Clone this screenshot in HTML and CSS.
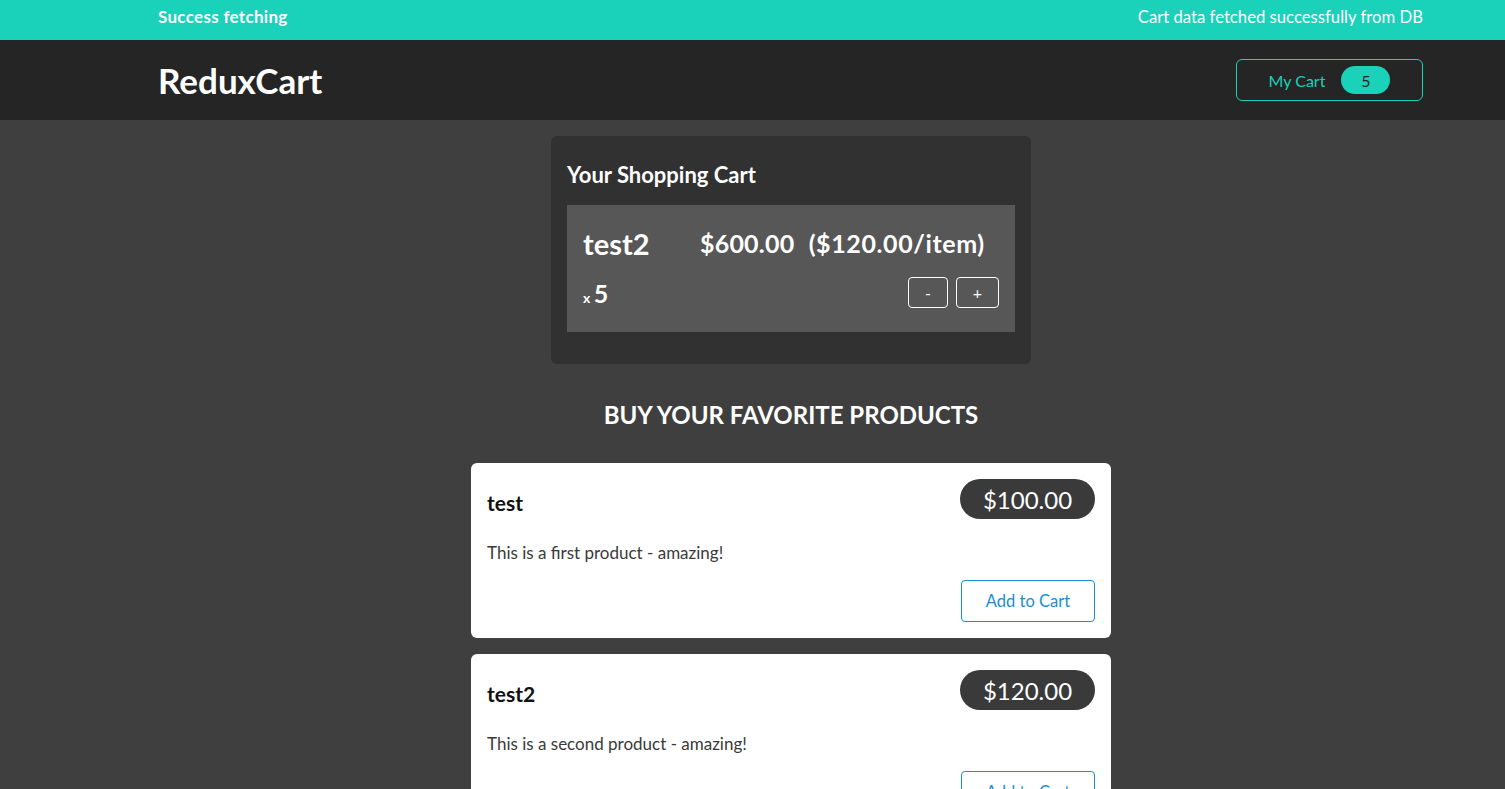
FILE: index.html
```html
<!DOCTYPE html>
<html lang="en">
<head>
<meta charset="utf-8">
<title>ReduxCart</title>
<link rel="stylesheet" href="styles.css">
</head>
<body>
<div class="page">
  <section class="notification">
    <h2>Success fetching</h2>
    <p>Cart data fetched successfully from DB</p>
  </section>
  <header class="header">
    <h1>ReduxCart</h1>
    <button class="cart-button"><span>My Cart</span><span class="badge">5</span></button>
  </header>
  <main class="main">
    <section class="cart">
      <h2>Your Shopping Cart</h2>
      <ul class="cart-list">
        <li class="item">
          <div class="item-header">
            <h3>test2</h3>
            <div class="price">$600.00 <span class="itemprice">($120.00/item)</span></div>
          </div>
          <div class="details">
            <div class="quantity">x <span>5</span></div>
            <div class="actions">
              <button>-</button>
              <button>+</button>
            </div>
          </div>
        </li>
      </ul>
    </section>
    <section class="products">
      <h2>Buy your favorite products</h2>
      <ul class="product-list">
        <li class="product">
          <div class="product-header">
            <h3>test</h3>
            <div class="product-price">$100.00</div>
          </div>
          <p>This is a first product - amazing!</p>
          <div class="product-actions"><button>Add to Cart</button></div>
        </li>
        <li class="product">
          <div class="product-header">
            <h3>test2</h3>
            <div class="product-price">$120.00</div>
          </div>
          <p>This is a second product - amazing!</p>
          <div class="product-actions"><button>Add to Cart</button></div>
        </li>
      </ul>
    </section>
  </main>
</div>
</body>
</html>
```
FILE: styles.css
```css
* { box-sizing: border-box; }
html, body {
  margin: 0;
  overflow: hidden;
  background: #3f3f3f;
  font-family: "Lato", "Liberation Sans", sans-serif;
}
.page {
  width: 1582px;
  min-height: 789px;
  background: #3f3f3f;
}
.notification {
  height: 40px;
  background: #1ad1b9;
  color: #fff;
  display: flex;
  justify-content: space-between;
  align-items: center;
  padding: 0 159px 7px 158px;
}
.notification h2 {
  margin: 0;
  font-size: 17px;
  letter-spacing: 0.3px;
  font-weight: 700;
}
.notification p {
  margin: 0;
  font-size: 16.7px;
}
.header {
  height: 80px;
  background: #252525;
  display: flex;
  justify-content: space-between;
  align-items: center;
  padding: 0 159px 0 158px;
}
.header h1 {
  margin: 0;
  color: #fff;
  font-size: 35px;
  font-weight: 700;
}
.cart-button {
  width: 187px;
  height: 42px;
  background: transparent;
  border: 1px solid #1ad1b9;
  border-radius: 6px;
  color: #1ad1b9;
  font-family: inherit;
  font-size: 16px;
  display: flex;
  align-items: center;
  justify-content: center;
  gap: 16px;
  padding: 0;
}
.badge {
  background: #1ad1b9;
  color: #252525;
  border-radius: 30px;
  width: 49px;
  height: 28px;
  display: inline-flex;
  align-items: center;
  justify-content: center;
  font-size: 16px;
}
.main {
  display: flex;
  flex-direction: column;
  align-items: center;
  padding-top: 16px;
}
.cart {
  width: 480px;
  background: #313131;
  border-radius: 6px;
  padding: 16px 16px 32px;
  color: #fff;
}
.cart h2 {
  margin: 11px 0 18px;
  font-size: 22px;
  line-height: 24px;
  font-weight: 700;
}
.cart-list, .product-list {
  list-style: none;
  margin: 0;
  padding: 0;
}
.item {
  background: #575757;
  padding: 16px 16px 24px;
}
.item-header {
  display: flex;
  align-items: center;
  height: 44px;
  margin-bottom: 12px;
}
.item h3 {
  margin: 0;
  width: 117px;
  font-size: 29px;
  font-weight: 700;
}
.price {
  font-size: 25px;
  font-weight: 700;
  letter-spacing: 0.2px;
}
.itemprice {
  margin-left: 8px;
  letter-spacing: 0.6px;
}
.details {
  display: flex;
  justify-content: space-between;
  align-items: center;
  height: 31px;
}
.quantity {
  font-size: 14px;
  font-weight: 700;
}
.quantity span {
  font-size: 25px;
}
.actions {
  display: flex;
  gap: 8px;
}
.actions button {
  height: 31px;
  background: transparent;
  border: 1px solid #fff;
  border-radius: 4px;
  color: #fff;
  font-family: inherit;
  font-size: 16px;
  padding: 0;
  width: 40px;
}
.actions button + button {
  width: 43px;
}
.products {
  width: 640px;
  margin-top: 36px;
}
.products h2 {
  margin: 0 0 33px;
  text-align: center;
  color: #fff;
  font-size: 24px;
  line-height: 30px;
  font-weight: 700;
  text-transform: uppercase;
}
.product {
  background: #fff;
  border-radius: 6px;
  padding: 16px;
  margin-bottom: 16px;
}
.product-header {
  display: flex;
  justify-content: space-between;
  align-items: center;
}
.product h3 {
  margin: 6px 0 0;
  font-size: 21px;
  font-weight: 700;
  color: #111;
}
.product-price {
  background: #3a3a3a;
  color: #fff;
  border-radius: 30px;
  height: 40px;
  width: 135px;
  display: flex;
  align-items: center;
  justify-content: center;
  font-size: 24px;
}
.product p {
  margin: 22px 0 15px;
  font-size: 17px;
  line-height: 24px;
  color: #3a3a3a;
}
.product-actions {
  display: flex;
  justify-content: flex-end;
}
.product-actions button {
  width: 134px;
  height: 42px;
  background: transparent;
  border: 1px solid #1a8ed1;
  border-radius: 4px;
  color: #1a8ed1;
  font-family: inherit;
  font-size: 16.5px;
}
```
